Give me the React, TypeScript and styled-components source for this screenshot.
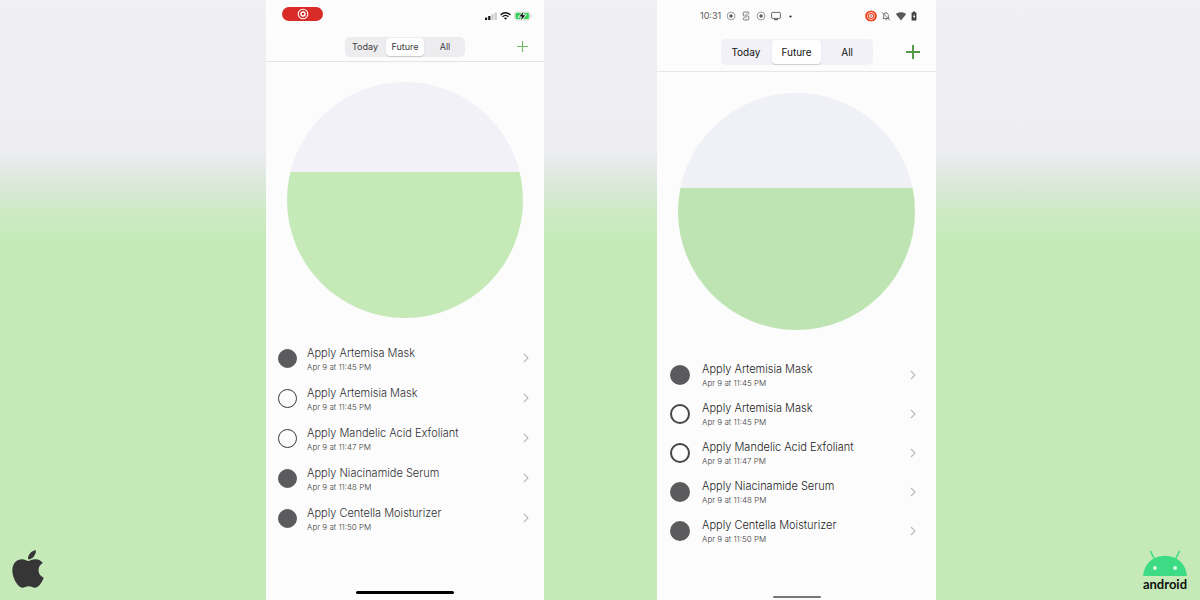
import React, { useState } from "react";
import styled, { createGlobalStyle, css } from "styled-components";
import { FaApple } from "react-icons/fa";

type Platform = "ios" | "android";

const GlobalStyle = createGlobalStyle`
  *, *::before, *::after { box-sizing: border-box; }
  body { margin: 0; font-family: Inter, "Liberation Sans", sans-serif; }
`;

const Stage = styled.main`
  display: grid;
  grid-template-columns: 266fr 278fr 113fr 279fr 264fr;
  min-height: 100vh;
  background: linear-gradient(#efeff4 0%, #ededf2 25%, #e4eae6 28%, #d9e9d8 31%, #cdeac5 35%, #c5eab8 40%, #c5eab8 100%);
`;

const Side = styled.div<{ $align: "start" | "end" }>`
  display: flex;
  align-items: flex-end;
  justify-content: ${(p) => (p.$align === "start" ? "flex-start" : "flex-end")};
  padding: 9px 12px;
`;

const AppleLogo = styled(FaApple)`
  width: 32px;
  height: 44px;
  color: #363636;
`;

const AndroidLogo = styled.div`
  display: flex;
  flex-direction: column;
  align-items: center;
  color: #111;
  font-family: Lato, sans-serif;
  font-size: 13px;
  font-weight: 700;
  line-height: 14px;
`;

const Screen = styled.section`
  display: flex;
  flex-direction: column;
  min-width: 0;
  background: #fcfcfc;
`;

const StatusBar = styled.div<{ $platform: Platform }>`
  display: flex;
  align-items: center;
  justify-content: space-between;
  height: 32px;
  padding: ${(p) => (p.$platform === "ios" ? "0 12px 0 16px" : "0 19px 0 43px")};
`;

const StatusGroup = styled.div<{ $gap: number }>`
  display: flex;
  align-items: center;
  gap: ${(p) => p.$gap}px;
  color: #5a5a5c;
`;

const Clock = styled.span`
  width: 21px;
  font-size: 9px;
  line-height: 12px;
  white-space: nowrap;
`;

const RecordingPill = styled.div`
  display: flex;
  align-items: center;
  justify-content: center;
  width: 41px;
  height: 14px;
  margin-bottom: 4px;
  border-radius: 7px;
  background: #d92b27;
`;

const NavBar = styled.header<{ $platform: Platform }>`
  display: grid;
  grid-template-columns: 1fr auto 1fr;
  align-items: center;
  height: ${(p) => (p.$platform === "ios" ? 30 : 40)}px;
  padding: 0 15px;
  border-bottom: 1px solid ${(p) => (p.$platform === "ios" ? "#e3e3e8" : "#e6e6e8")};
`;

const Segments = styled.div<{ $platform: Platform }>`
  display: grid;
  grid-template-columns: repeat(3, 1fr);
  grid-column: 2;
  gap: 2px;
  width: ${(p) => (p.$platform === "ios" ? 120 : 152)}px;
  height: ${(p) => (p.$platform === "ios" ? 20 : 26)}px;
  padding: 1px;
  border-radius: 5px;
  background: ${(p) => (p.$platform === "ios" ? "#ededf0" : "#f1f1f7")};
`;

const Segment = styled.button<{ $platform: Platform; $active: boolean }>`
  padding: 0;
  border: 0;
  border-radius: 4px;
  background: transparent;
  font-family: inherit;
  color: #3c3c3e;
  font-size: 9px;
  line-height: 12px;
  cursor: pointer;
  ${(p) =>
    p.$platform === "android" &&
    css`
      color: #111;
      font-size: 10px;
      line-height: 16px;
    `}
  ${(p) =>
    p.$active &&
    css`
      background: #fefefe;
      box-shadow: 0 1px 1px rgba(0, 0, 0, 0.16);
    `}
`;

const AddButton = styled.button<{ $platform: Platform }>`
  display: flex;
  justify-self: end;
  padding: 0;
  border: 0;
  background: none;
  color: ${(p) => (p.$platform === "ios" ? "#72b968" : "#57994a")};
  cursor: pointer;
`;

const ProgressCircle = styled.div<{ $platform: Platform }>`
  width: 85%;
  margin: ${(p) => (p.$platform === "ios" ? "20px auto" : "21px auto 25px")};
  aspect-ratio: 1;
  border-radius: 50%;
  background: ${(p) =>
    p.$platform === "ios"
      ? "linear-gradient(#f2f1f8 38%, #c5eab8 38%)"
      : "linear-gradient(#f0f0f7 40%, #bfe4b3 40%)"};
`;

const TaskList = styled.ul<{ $platform: Platform }>`
  margin: 0;
  padding: ${(p) => (p.$platform === "ios" ? "0 15px 0 12px" : "0 20px 0 13px")};
  list-style: none;
`;

const TaskRow = styled.li<{ $platform: Platform }>`
  display: flex;
  align-items: center;
  gap: ${(p) => (p.$platform === "ios" ? 10 : 12)}px;
  height: ${(p) => (p.$platform === "ios" ? 40 : 39)}px;
`;

const Check = styled.input<{ $platform: Platform }>`
  appearance: none;
  flex: none;
  width: ${(p) => (p.$platform === "ios" ? 19 : 20)}px;
  height: ${(p) => (p.$platform === "ios" ? 19 : 20)}px;
  margin: 0;
  border: ${(p) => (p.$platform === "ios" ? "1px solid #39393b" : "2px solid #454547")};
  border-radius: 50%;
  &:checked {
    border-color: #5b5b5d;
    background: #5b5b5d;
  }
`;

const TaskText = styled.label<{ $platform: Platform }>`
  display: flex;
  flex: 1;
  flex-direction: column;
  min-width: 0;
  padding-top: ${(p) => (p.$platform === "ios" ? 2 : 0)}px;
  white-space: nowrap;
`;

const TaskTitle = styled.span<{ $platform: Platform }>`
  color: ${(p) => (p.$platform === "ios" ? "#2f2f31" : "#1c1c1e")};
  font-size: 11px;
  font-weight: 300;
  line-height: 16px;
`;

const TaskTime = styled.span`
  color: #3c3c3e;
  font-size: 8px;
  font-weight: 300;
  line-height: 12px;
`;

const OpenButton = styled.button`
  display: flex;
  padding: 0;
  border: 0;
  background: none;
  color: #b8b8bc;
  cursor: pointer;
`;

const HomeIndicator = styled.div<{ $platform: Platform }>`
  align-self: center;
  width: ${(p) => (p.$platform === "ios" ? 98 : 48)}px;
  height: ${(p) => (p.$platform === "ios" ? 3 : 2)}px;
  margin: ${(p) => (p.$platform === "ios" ? "auto 0 6px" : "auto 0 2px")};
  border-radius: 2px;
  background: ${(p) => (p.$platform === "ios" ? "#000" : "#777")};
`;

const RecordDot = ({ size }: { size: number }) => (
  <svg width={size} height={size} viewBox="0 0 10 10" fill="none" stroke="currentColor">
    <circle cx="5" cy="5" r="3.9" strokeWidth="0.6" />
    <circle cx="5" cy="5" r="1.7" fill="currentColor" stroke="none" />
  </svg>
);

const IosStatus = () => (
  <StatusBar $platform="ios">
    <RecordingPill>
      <svg width="12" height="12" viewBox="0 0 12 12" fill="none" stroke="#fff">
        <circle cx="6" cy="6" r="4.8" strokeWidth="1.1" />
        <circle cx="6" cy="6" r="2" strokeWidth="1.5" />
      </svg>
    </RecordingPill>
    <StatusGroup $gap={3}>
      <svg width="12" height="8" viewBox="0 0 12 8" fill="#111">
        <rect x="0" y="5.4" width="2.2" height="2.6" rx="0.5" />
        <rect x="3.2" y="4" width="2.2" height="4" rx="0.5" />
        <rect x="6.4" y="2" width="2.2" height="6" rx="0.5" fill="#c9c9cb" />
        <rect x="9.6" y="0.4" width="2.2" height="7.6" rx="0.5" fill="#c9c9cb" />
      </svg>
      <svg width="11" height="8" viewBox="0 0 11 8" fill="none" stroke="#111" strokeWidth="1.4">
        <path d="M0.6 2.9C3.4 0.1 7.6 0.1 10.4 2.9" />
        <path d="M2.5 4.8C4.2 3.2 6.8 3.2 8.5 4.8" />
        <path d="M5.5 7.8L3.9 6.1C4.8 5.3 6.2 5.3 7.1 6.1Z" fill="#111" stroke="none" />
      </svg>
      <svg width="18" height="10" viewBox="0 0 18 10">
        <rect x="0.5" y="1" width="15.5" height="8" rx="2.4" fill="#e3f5e7" stroke="#c9cfca" strokeWidth="0.8" />
        <rect x="1.6" y="2.1" width="13.3" height="5.8" rx="1.4" fill="#34d059" />
        <path d="M16.9 3.7V6.3C17.9 5.9 17.9 4.1 16.9 3.7Z" fill="#b5b5b7" />
        <path d="M9.4 0.8L5.2 5.6H7.9L7 9.2L11.4 4.3H8.6Z" fill="#111" stroke="#fcfcfc" strokeWidth="1.6" paintOrder="stroke" />
      </svg>
    </StatusGroup>
  </StatusBar>
);

const AndroidStatus = () => (
  <StatusBar $platform="android">
    <StatusGroup $gap={5}>
      <Clock>10:31</Clock>
      <RecordDot size={10} />
      <svg width="10" height="10" viewBox="0 0 10 10" fill="none" stroke="currentColor" strokeWidth="0.8">
        <path d="M7.8 2.8V2Q7.8 1 6.8 1H3.2Q2.2 1 2.2 2V4Q2.2 5 3.2 5H6.8Q7.800 5 7.800 6V8Q7.800 9 6.800 9H3.200Q2.200 9 2.200 8V7.200" />
        <path d="M4.2 3.2H7.8M2.2 6.800H5.800" strokeWidth="0.500" />
      </svg>
      <RecordDot size={10} />
      <svg width="10" height="10" viewBox="0 0 10 10" fill="none" stroke="currentColor" strokeWidth="0.9">
        <rect x="0.6" y="1.4" width="8.8" height="6" rx="0.7" />
        <path d="M3 8.6H7" strokeWidth="1.1" />
      </svg>
      <svg width="10" height="10" viewBox="0 0 10 10">
        <circle cx="4.5" cy="5.5" r="1.1" fill="#222" />
      </svg>
    </StatusGroup>
    <StatusGroup $gap={4}>
      <svg width="12" height="12" viewBox="0 0 12 12">
        <rect x="0.2" y="0.8" width="11.6" height="10.4" rx="5.2" fill="#f5360f" />
        <circle cx="6" cy="6" r="3.6" fill="none" stroke="#fff" strokeWidth="0.8" />
        <rect x="4.500" y="4.500" width="3" height="3" rx="0.6" fill="#b9a29c" stroke="#fff" strokeWidth="0.7" />
      </svg>
      <svg width="10" height="10" viewBox="0 0 10 10" fill="none" stroke="currentColor" strokeWidth="0.8">
        <path d="M2.6 7.4V4.5C2.6 3 3.6 2 5 2S7.4 3 7.4 4.5V7.4M1.6 7.5H8.2M5 2V0.9M4.2 8.9H5.8M1 1.2L9 9.4" />
      </svg>
      <svg width="12" height="10" viewBox="0 0 12 10" fill="currentColor">
        <path d="M6 9.4L0.8 3.1C3.8 0.5 8.2 0.5 11.2 3.1Z" />
      </svg>
      <svg width="6" height="10" viewBox="0 0 6 10">
        <path d="M2 0.6H4V1.5H5.4V9.4H0.6V1.5H2Z" fill="#3c3c3e" />
        <path d="M3.4 2.8L1.9 5.7H2.8V8L4.2 5H3.4Z" fill="#fcfcfc" />
      </svg>
    </StatusGroup>
  </StatusBar>
);

interface Task {
  title: string;
  time: string;
  done: boolean;
}

const laterTasks: Task[] = [
  { title: "Apply Artemisia Mask", time: "Apr 9 at 11:45 PM", done: false },
  { title: "Apply Mandelic Acid Exfoliant", time: "Apr 9 at 11:47 PM", done: false },
  { title: "Apply Niacinamide Serum", time: "Apr 9 at 11:48 PM", done: true },
  { title: "Apply Centella Moisturizer", time: "Apr 9 at 11:50 PM", done: true },
];

const tasksFor: Record<Platform, Task[]> = {
  ios: [{ title: "Apply Artemisa Mask", time: "Apr 9 at 11:45 PM", done: true }, ...laterTasks],
  android: [{ title: "Apply Artemisia Mask", time: "Apr 9 at 11:45 PM", done: true }, ...laterTasks],
};

const Phone = ({ platform }: { platform: Platform }) => {
  const [filter, setFilter] = useState("Future");
  const plus = platform === "ios" ? 13 : 16;
  return (
    <Screen aria-label={platform}>
      {platform === "ios" ? <IosStatus /> : <AndroidStatus />}
      <NavBar $platform={platform}>
        <Segments $platform={platform}>
          {["Today", "Future", "All"].map((name) => (
            <Segment
              key={name}
              type="button"
              $platform={platform}
              $active={name === filter}
              aria-pressed={name === filter}
              onClick={() => setFilter(name)}
            >
              {name}
            </Segment>
          ))}
        </Segments>
        <AddButton $platform={platform} type="button" aria-label="Add task">
          <svg width={plus} height={plus} viewBox={`0 0 ${plus} ${plus}`} stroke="currentColor" strokeWidth={platform === "ios" ? 1.1 : 2}>
            <path d={`M${plus / 2} 1V${plus - 1}M1 ${plus / 2}H${plus - 1}`} />
          </svg>
        </AddButton>
      </NavBar>
      <ProgressCircle $platform={platform} />
      <TaskList $platform={platform}>
        {tasksFor[platform].map((task, i) => {
          const id = `${platform}-task-${i}`;
          return (
            <TaskRow key={id} $platform={platform}>
              <Check $platform={platform} id={id} type="checkbox" defaultChecked={task.done} />
              <TaskText $platform={platform} htmlFor={id}>
                <TaskTitle $platform={platform}>{task.title}</TaskTitle>
                <TaskTime>{task.time}</TaskTime>
              </TaskText>
              <OpenButton type="button" aria-label={`Open ${task.title}`}>
                <svg width="6" height="10" viewBox="0 0 6 10" fill="none" stroke="currentColor" strokeWidth="1.1">
                  <path d="M1 1L5 5L1 9" />
                </svg>
              </OpenButton>
            </TaskRow>
          );
        })}
      </TaskList>
      <HomeIndicator $platform={platform} />
    </Screen>
  );
};

export default function App() {
  return (
    <>
      <GlobalStyle />
      <Stage>
        <Side $align="start">
          <AppleLogo aria-label="Apple" />
        </Side>
        <Phone platform="ios" />
        <div />
        <Phone platform="android" />
        <Side $align="end">
          <AndroidLogo>
            <svg width="46" height="27" viewBox="0 0 46 27" aria-hidden="true">
              <path d="M1 26C2 14 10.8 5.8 23 5.8S44 14 45 26Z" fill="#3ddc84" />
              <path d="M12.4 8.800L8.6 1.4M33.600 8.800L37.400 1.400" stroke="#3ddc84" strokeWidth="1.5" strokeLinecap="round" />
              <circle cx="12.9" cy="18" r="1.9" fill="#e3f7e4" />
              <circle cx="33.1" cy="18" r="1.9" fill="#e3f7e4" />
            </svg>
            android
          </AndroidLogo>
        </Side>
      </Stage>
    </>
  );
}
